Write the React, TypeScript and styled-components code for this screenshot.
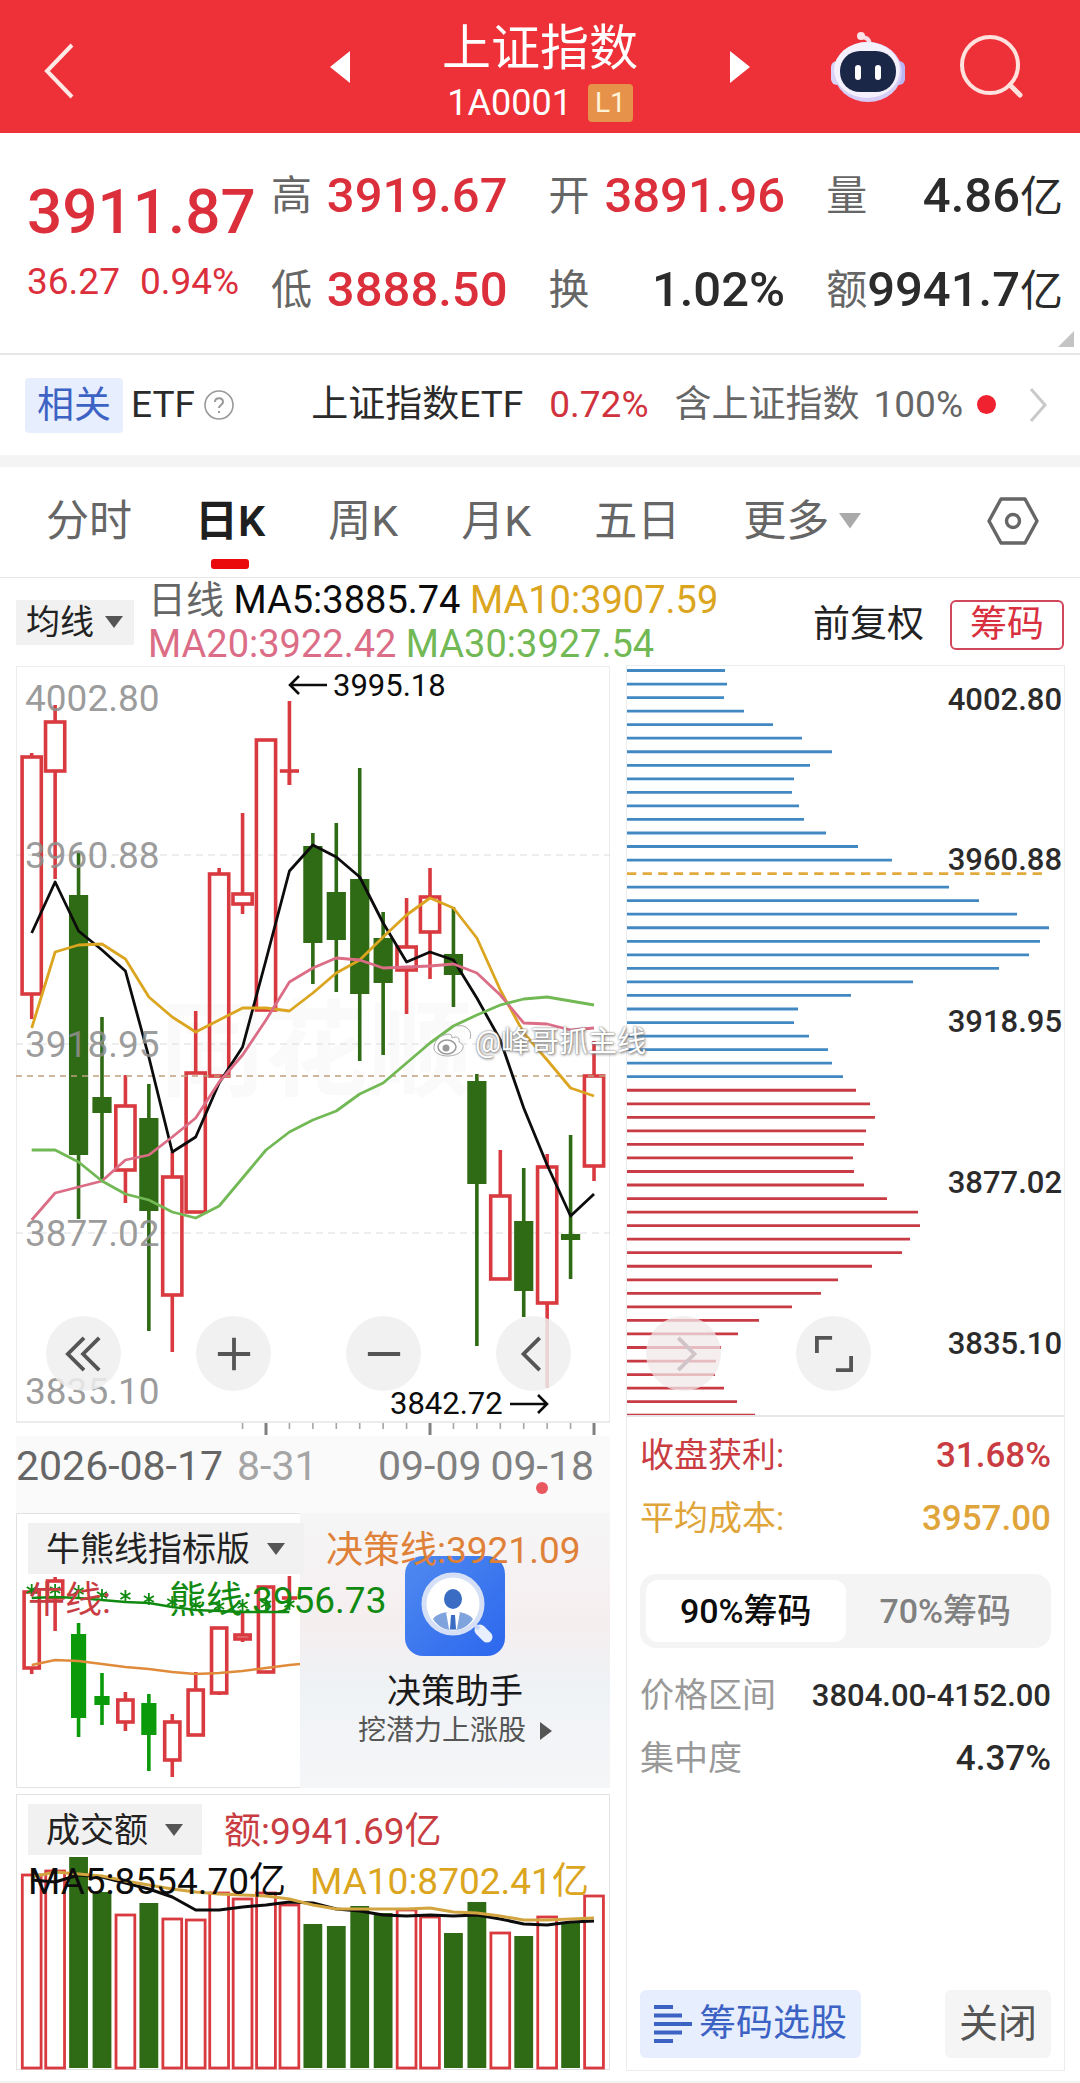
import { useState } from "react";
import styled, { createGlobalStyle } from "styled-components";

type Candle = {
  up: boolean;
  high: number;
  top: number;
  bottom: number;
  low: number;
};

const RED = "#d93a40";
const GREEN = "#2f6a14";
const YELLOW = "#dba520";
const PINK = "#dc6d86";
const LIME = "#72b955";

const STEP = 23.43;
const cx = (i: number) => 31.7 + STEP * i;

const toCandles = (rows: number[][]): Candle[] =>
  rows.map(([up, high, top, bottom, low]) => ({
    up: up === 1,
    high,
    top,
    bottom,
    low,
  }));

const toPoints = (values: number[]) =>
  values.map((y, i) => `${cx(i)},${y}`).join(" ");

const dayCandles = toCandles([
  [1, 753, 757, 994, 1019],
  [1, 705, 722, 771, 879],
  [0, 853, 895, 1155, 1219],
  [0, 1017, 1097, 1113, 1180],
  [1, 1075, 1106, 1170, 1203],
  [0, 1084, 1118, 1211, 1331],
  [1, 1152, 1177, 1295, 1352],
  [1, 1011, 1073, 1212, 1212],
  [1, 868, 874, 1076, 1076],
  [1, 813, 894, 904, 914],
  [1, 740, 740, 1010, 1010],
  [1, 701, 771, 771, 785],
  [0, 833, 846, 943, 984],
  [0, 823, 892, 940, 992],
  [0, 768, 879, 994, 1061],
  [0, 912, 938, 983, 1055],
  [1, 898, 947, 970, 1014],
  [1, 868, 897, 932, 979],
  [0, 907, 954, 975, 1007],
  [0, 1074, 1081, 1184, 1346],
  [1, 1150, 1196, 1279, 1279],
  [0, 1168, 1221, 1291, 1317],
  [1, 1154, 1167, 1303, 1388],
  [0, 1135, 1234, 1240, 1279],
  [1, 1041, 1076, 1166, 1181],
]);

const ma5 = [
  933, 882, 931, 950, 971, 1057, 1152, 1137, 1083, 1047, 960, 871, 845, 857,
  877, 923, 962, 952, 960, 998, 1040, 1108, 1165, 1216, 1194,
];
const ma10 = [
  1028, 952, 945, 944, 959, 997, 1017, 1032, 1020, 1008, 1008, 1011, 993, 973,
  960, 937, 915, 898, 908, 938, 990, 1033, 1060, 1088, 1096,
];
const ma20 = [
  1220, 1193, 1187, 1181, 1160, 1155, 1137, 1118, 1082, 1055, 1020, 982, 968,
  958, 960, 968, 967, 966, 964, 973, 995, 1023, 1024, 1030, 1028,
];
const ma30 = [
  1150, 1150, 1162, 1181, 1194, 1200, 1212, 1218, 1206, 1178, 1150, 1132, 1120,
  1111, 1094, 1083, 1063, 1043, 1026, 1015, 1005, 999, 997, 1001, 1005,
];

const bullCandles = toCandles([
  [1, 1592, 1592, 1668, 1674],
  [1, 1577, 1581, 1598, 1631],
  [0, 1623, 1634, 1718, 1737],
  [0, 1673, 1696, 1705, 1725],
  [1, 1692, 1700, 1722, 1731],
  [0, 1694, 1703, 1735, 1771],
  [1, 1714, 1722, 1760, 1777],
  [1, 1672, 1690, 1735, 1735],
  [1, 1627, 1628, 1693, 1695],
  [1, 1612, 1635, 1639, 1642],
  [1, 1587, 1587, 1672, 1672],
  [1, 1576, 1598, 1598, 1602],
]);
const bearLine = [
  1598, 1597, 1598, 1600, 1602, 1603, 1607, 1610, 1611, 1612, 1612, 1612,
];
const starLine = [
  1590, 1590, 1591, 1595, 1596, 1599, 1602, 1605, 1606, 1605, 1604, 1604,
];
const decisionLine = [
  1665, 1660, 1661, 1664, 1667, 1669, 1672, 1674, 1673, 1671, 1668, 1665,
];

const volumes = [
  [1, 1875],
  [1, 1871],
  [0, 1857],
  [0, 1892],
  [1, 1915],
  [0, 1903],
  [1, 1919],
  [1, 1920],
  [1, 1893],
  [1, 1899],
  [1, 1893],
  [1, 1905],
  [0, 1924],
  [0, 1926],
  [0, 1906],
  [0, 1913],
  [1, 1910],
  [1, 1917],
  [0, 1933],
  [0, 1902],
  [1, 1933],
  [0, 1936],
  [1, 1917],
  [0, 1922],
  [1, 1896],
];
const volMa5 = [
  1880, 1882, 1875, 1877, 1883, 1889, 1897, 1910, 1910, 1907, 1905, 1902, 1903,
  1909, 1911, 1915, 1916, 1915, 1916, 1915, 1919, 1924, 1925, 1922, 1921,
];
const volMa10 = [
  1877, 1872, 1874, 1876, 1881, 1885, 1889, 1892, 1894, 1895, 1896, 1899, 1905,
  1909, 1909, 1909, 1909, 1908, 1912, 1913, 1916, 1920, 1920, 1919, 1918,
];

// chip amount per price level, top to bottom; 0 is the average cost level
const chips = [
  98, 100, 97, 117, 146, 175, 205, 183, 167, 165, 172, 177, 199, 231, 265, 0,
  322, 352, 390, 422, 413, 402, 372, 286, 224, 171, 167, 182, 201, 205, 216,
  229, 243, 248, 239, 237, 226, 227, 237, 260, 291, 293, 283, 275, 245, 211,
  194, 165, 132, 111, 94, 89, 88, 97, 110, 128,
];
const FIRST_PROFIT = 31;

const periods = ["分时", "日K", "周K", "月K", "五日"];

const Candles = ({
  data,
  half,
  down,
}: {
  data: Candle[];
  half: number;
  down: string;
}) => (
  <>
    {data.map((c, i) => {
      const x = cx(i);
      const color = c.up ? RED : down;
      const flat = c.top === c.bottom;
      return (
        <g key={i} stroke={color} strokeWidth={3.6}>
          <line x1={x} x2={x} y1={c.high} y2={flat ? c.low : c.top} />
          <line x1={x} x2={x} y1={c.bottom} y2={c.low} />
          {flat && <line x1={x - half} x2={x + half} y1={c.top} y2={c.top} />}
          {!flat && (
            <rect
              x={x - half}
              y={c.top}
              width={half * 2}
              height={c.bottom - c.top}
              fill={c.up ? "none" : down}
              stroke={c.up ? color : "none"}
            />
          )}
        </g>
      );
    })}
  </>
);

const DayChart = () => (
  <Chart viewBox="16 666 594 770" role="img" aria-label="日K">
    <text x={160} y={1088} fontSize={104} fontWeight={700} fill="#fafafb">
      同花顺
    </text>
    <path d="M16.5 1422V666.5H609.5V1422" fill="none" stroke="#ececec" />
    <line x1={16} x2={610} y1={1422} y2={1422} stroke="#d8d8d8" />
    {[855, 1044, 1233].map((y) => (
      <line
        key={y}
        x1={16}
        x2={610}
        y1={y}
        y2={y}
        stroke="#dcdcdc"
        strokeDasharray="7 5"
      />
    ))}
    <Candles data={dayCandles} half={9.6} down={GREEN} />
    <line
      x1={16}
      x2={610}
      y1={1076}
      y2={1076}
      stroke="#bfa07c"
      strokeWidth={1.6}
      strokeDasharray="6 5"
    />
    <g fill="none" strokeWidth={2.8} strokeLinejoin="round">
      <polyline points={toPoints(ma5)} stroke="#0c0c0c" />
      <polyline points={toPoints(ma10)} stroke={YELLOW} />
      <polyline points={toPoints(ma20)} stroke={PINK} />
      <polyline points={toPoints(ma30)} stroke={LIME} />
    </g>
    <g fontSize={37} fill="#8e8e8e" fillOpacity={0.88}>
      <text x={25} y={711}>4002.80</text>
      <text x={25} y={868}>3960.88</text>
      <text x={25} y={1057}>3918.95</text>
      <text x={25} y={1246}>3877.02</text>
      <text x={25} y={1404}>3835.10</text>
    </g>
    <g fontSize={31} fill="#0c0c0c">
      <text x={333} y={696}>3995.18</text>
      <text x={390} y={1414}>3842.72</text>
    </g>
    <g fill="none" stroke="#0c0c0c" strokeWidth={2.6}>
      <path d="M327 685H290M299 676L290 685L299 694" />
      <path d="M510 1404H547M538 1395L547 1404L538 1413" />
    </g>
    {Array.from({ length: 16 }, (_, k) => k + 9).map((i) => {
      const major = (i - 10) % 7 === 0;
      return (
        <line
          key={i}
          x1={cx(i)}
          x2={cx(i)}
          y1={1423}
          y2={major ? 1435 : 1429}
          stroke={major ? "#808080" : "#a5a5a5"}
          strokeWidth={major ? 3 : 1.6}
        />
      );
    })}
  </Chart>
);

const ChipChart = () => (
  <Chart viewBox="627 666 437 749" role="img" aria-label="筹码分布">
    {chips.map((length, i) => {
      const y = 670.5 + i * 13.54;
      return length === 0 ? (
        <line
          key={i}
          x1={627}
          x2={1043}
          y1={y}
          y2={y}
          stroke="#e2a93c"
          strokeWidth={2.6}
          strokeDasharray="9.3 6.3"
        />
      ) : (
        <line
          key={i}
          x1={627}
          x2={627 + length}
          y1={y}
          y2={y}
          stroke={i < FIRST_PROFIT ? "#4289c4" : "#c93b44"}
          strokeWidth={2.8}
        />
      );
    })}
    <g fontSize={31} fontWeight={500} fill="#2b2b2b" textAnchor="end">
      <text x={1062} y={710}>4002.80</text>
      <text x={1062} y={870}>3960.88</text>
      <text x={1062} y={1032}>3918.95</text>
      <text x={1062} y={1193}>3877.02</text>
      <text x={1062} y={1354}>3835.10</text>
    </g>
  </Chart>
);

const BullBearChart = () => (
  <Chart viewBox="16 1513 284 275" role="img" aria-label="牛熊线">
    <path d="M300 1513.5H16.5V1787.5H300" fill="none" stroke="#e2e2e2" />
    <Candles data={bullCandles} half={7.6} down="#0a9a0a" />
    <g fill="none" strokeWidth={2.4}>
      <polyline points={toPoints(bearLine)} stroke="#118a11" />
      <polyline
        points={`${toPoints(decisionLine)} 300,1664`}
        stroke="#e08a3c"
      />
    </g>
    <g stroke="#118a11" strokeWidth={1.8}>
      {starLine.map((y, i) => (
        <path
          key={i}
          d={`M${cx(i)} ${y - 6}V${y + 6}M${cx(i) - 5} ${y - 3}L${cx(i) + 5} ${
            y + 3
          }M${cx(i) - 5} ${y + 3}L${cx(i) + 5} ${y - 3}`}
        />
      ))}
    </g>
  </Chart>
);

const VolumeChart = () => (
  <Chart viewBox="16 1794 594 276" role="img" aria-label="成交额">
    <rect
      x={16.5}
      y={1794.5}
      width={593}
      height={275}
      fill="none"
      stroke="#e2e2e2"
    />
    {volumes.map(([up, top], i) => (
      <rect
        key={i}
        x={cx(i) - 9.4}
        y={top}
        width={18.8}
        height={2068 - top}
        fill={up ? "none" : GREEN}
        stroke={up ? RED : "none"}
        strokeWidth={2.8}
      />
    ))}
    <g fill="none" strokeWidth={3} strokeLinejoin="round">
      <polyline points={toPoints(volMa5)} stroke="#0c0c0c" />
      <polyline points={toPoints(volMa10)} stroke="#d3a540" />
    </g>
  </Chart>
);

const RobotIcon = () => (
  <svg width="76" height="72" viewBox="0 0 76 72" fill="none">
    <path
      d="M40 15C40 9 37 6 31 6"
      stroke="#f5dbe6"
      strokeWidth="4"
      strokeLinecap="round"
    />
    <circle cx="31" cy="5" r="4" fill="#fbe3ea" />
    <rect x="1" y="30" width="12" height="24" rx="6" fill="#d9d3f6" />
    <rect x="63" y="30" width="12" height="24" rx="6" fill="#b9b4f4" />
    <ellipse cx="38" cy="41" rx="34" ry="30" fill="#d5cdf6" />
    <ellipse cx="37" cy="39" rx="33" ry="28" fill="#f4f0fc" />
    <rect x="10" y="20" width="56" height="41" rx="20" fill="#1b2747" />
    <rect x="25" y="34" width="6" height="15" rx="3" fill="#fff" />
    <rect x="45" y="34" width="6" height="15" rx="3" fill="#fff" />
  </svg>
);

const AssistantIcon = () => (
  <svg width="100" height="100" viewBox="0 0 100 100">
    <defs>
      <linearGradient id="assistant" x1="0" y1="0" x2="1" y2="1">
        <stop offset="0" stopColor="#4f8af0" />
        <stop offset="1" stopColor="#2c67ee" />
      </linearGradient>
    </defs>
    <rect width="100" height="100" rx="18" fill="url(#assistant)" />
    <path
      d="M75 74L82 81"
      stroke="#e8f0ff"
      strokeWidth="11"
      strokeLinecap="round"
    />
    <path d="M67 66L74 73" stroke="#c5d6fa" strokeWidth="4" />
    <circle cx="48" cy="48" r="29" fill="#fff" stroke="#d5dff5" strokeWidth="5" />
    <ellipse cx="48" cy="43" rx="9" ry="10" fill="#3a6cc4" />
    <path
      d="M28 63C31 59 36 57 42 56L48 70L54 56C60 57 65 59 68 63C63 71 56 74 48 74C40 74 33 71 28 63Z"
      fill="#7fa3dc"
    />
    <path d="M41 56L44 73H52L55 56L48 60Z" fill="#fff" />
    <path d="M46 59H50L51 73H45Z" fill="#3a6cc4" />
  </svg>
);

const WeiboIcon = () => (
  <svg width="40" height="34" viewBox="0 0 40 34" fill="none">
    <path
      d="M16 9C8 10 1 17 2 24C4 33 27 34 31 23C32 19 28 18 27 17C28 12 24 11 20 13C20 10 19 9 16 9Z"
      fill="#fff"
      stroke="#aaa"
      strokeWidth="1"
    />
    <ellipse cx="15" cy="22" rx="9" ry="7" stroke="#999" strokeWidth="1.5" />
    <circle cx="14" cy="23" r="3.5" fill="#999" />
    <path
      d="M26 3C33 1 39 7 36 14M27 9C30 8 32 10 31 13"
      stroke="#fff"
      strokeWidth="3"
      strokeLinecap="round"
    />
    <path d="M25 1C34 -1 41 6 38 14" stroke="#aaa" strokeWidth="1" />
  </svg>
);

const Picker = ({ label, wide }: { label: string; wide?: boolean }) => (
  <PickerBox $wide={wide}>
    <select aria-label={label} defaultValue={label}>
      <option>{label}</option>
    </select>
    <Triangle viewBox="0 0 20 14" $size={20}>
      <path d="M1 1H19L10 13Z" fill="#555" />
    </Triangle>
  </PickerBox>
);

const App = () => {
  const [period, setPeriod] = useState("日K");
  const [share, setShare] = useState("90%筹码");

  return (
    <>
      <GlobalStyle />
      <Header>
        <IconButton aria-label="返回" className="back">
          <svg width="32" height="58" viewBox="0 0 32 58" fill="none">
            <path d="M29 3L4 29L29 55" stroke="#ffe9e6" strokeWidth="4" />
          </svg>
        </IconButton>
        <div className="stock">
          <IconButton aria-label="上一个">
            <svg width="20" height="32" viewBox="0 0 20 32">
              <path d="M20 0V32L0 16Z" fill="#fff" />
            </svg>
          </IconButton>
          <div className="name">
            <h1>上证指数</h1>
            <p>
              1A0001 <span>L1</span>
            </p>
          </div>
          <IconButton aria-label="下一个">
            <svg width="20" height="32" viewBox="0 0 20 32">
              <path d="M0 0V32L20 16Z" fill="#fff" />
            </svg>
          </IconButton>
        </div>
        <div className="tools">
          <IconButton aria-label="智能助手">
            <RobotIcon />
          </IconButton>
          <IconButton aria-label="搜索">
            <svg width="66" height="66" viewBox="0 0 66 66" fill="none">
              <circle cx="32" cy="31" r="28" stroke="#ffe1de" strokeWidth="4" />
              <path
                d="M52 51L62 61"
                stroke="#ffe1de"
                strokeWidth="5"
                strokeLinecap="round"
              />
            </svg>
          </IconButton>
        </div>
      </Header>

      <Quote>
        <div className="price">
          <strong>3911.87</strong>
          <p>
            <span>36.27</span>
            <span>0.94%</span>
          </p>
        </div>
        <Stats $red>
          <dt>高</dt>
          <dd>3919.67</dd>
          <dt>低</dt>
          <dd>3888.50</dd>
        </Stats>
        <Stats>
          <dt>开</dt>
          <dd className="up">3891.96</dd>
          <dt>换</dt>
          <dd>1.02%</dd>
        </Stats>
        <Stats>
          <dt>量</dt>
          <dd>
            4.86<small>亿</small>
          </dd>
          <dt>额</dt>
          <dd>
            9941.7<small>亿</small>
          </dd>
        </Stats>
        <svg className="corner" width="16" height="16" viewBox="0 0 16 16">
          <path d="M16 0V16H0Z" fill="#c4c4c4" />
        </svg>
      </Quote>

      <EtfBar>
        <span className="tag">相关</span>
        <span>ETF</span>
        <svg width="32" height="32" viewBox="0 0 32 32" fill="none">
          <circle cx="16" cy="16" r="14" stroke="#999" strokeWidth="1.6" />
          <path
            d="M12 13C12 8 20 8 20 13C20 16 16 16 16 19M16 22V24"
            stroke="#999"
            strokeWidth="2"
          />
        </svg>
        <a href="#etf">
          <span>上证指数ETF</span>
          <span className="rate">0.72%</span>
          <span className="muted">
            <span>含上证指数</span>
            <span>100%</span>
            <i />
          </span>
        </a>
        <svg width="20" height="36" viewBox="0 0 20 36" fill="none">
          <path d="M3 2L17 18L3 34" stroke="#c9c9c9" strokeWidth="3" />
        </svg>
      </EtfBar>

      <Tabs>
        {periods.map((name) => (
          <Tab
            key={name}
            $active={name === period}
            onClick={() => setPeriod(name)}
          >
            {name}
          </Tab>
        ))}
        <Tab>
          更多
          <Triangle viewBox="0 0 20 14" $size={22}>
            <path d="M0 0H20L10 14Z" fill="#aaa" />
          </Triangle>
        </Tab>
        <IconButton aria-label="设置" className="settings">
          <svg width="54" height="50" viewBox="0 0 54 50" fill="none">
            <path
              d="M15 3H39L51 25L39 47H15L3 25Z"
              stroke="#666"
              strokeWidth="3.4"
              strokeLinejoin="round"
            />
            <circle cx="27" cy="25" r="6.5" stroke="#666" strokeWidth="3.4" />
          </svg>
        </IconButton>
      </Tabs>

      <Averages>
        <Picker label="均线" />
        <p className="legend">
          <Tint $color="#666">日线</Tint> <Tint $color="#0c0c0c">MA5:3885.74</Tint>{" "}
          <Tint $color={YELLOW}>MA10:3907.59</Tint>
          <br />
          <Tint $color={PINK}>MA20:3922.42</Tint>{" "}
          <Tint $color={LIME}>MA30:3927.54</Tint>
        </p>
        <div className="modes">
          <button>前复权</button>
          <button className="chips">筹码</button>
        </div>
      </Averages>

      <Board>
        <div>
          <DayChart />
          <Dates>
            <span className="first">2026-08-17</span>
            <span className="faded">8-31</span>
            <span className="later">09-09</span>
            <span className="last">09-18</span>
          </Dates>
          <Indicator>
            <BullBearChart />
            <Promo href="#assistant">
              <AssistantIcon />
              <strong>决策助手</strong>
              <span>
                挖潜力上涨股
                <svg width="12" height="18" viewBox="0 0 12 18">
                  <path d="M0 0L12 9L0 18Z" fill="#555" />
                </svg>
              </span>
            </Promo>
            <Overlay>
              <div>
                <Picker label="牛熊线指标版" wide />
                <Tint $color="#df8138">决策线:3921.09</Tint>
              </div>
              <p className="bull">
                <Tint $color="#c83c42">牛线:</Tint>
                <Tint $color="#118a11">熊线:3956.73</Tint>
              </p>
            </Overlay>
          </Indicator>
          <Volume>
            <VolumeChart />
            <Overlay>
              <div>
                <Picker label="成交额" wide />
                <Tint $color="#c83c42">额:9941.69亿</Tint>
              </div>
              <p>
                <Tint $color="#0c0c0c">MA5:8554.70亿</Tint>
                <Tint $color={YELLOW}>MA10:8702.41亿</Tint>
              </p>
            </Overlay>
          </Volume>
        </div>

        <ChipPanel>
          <ChipChart />
          <ChipInfo>
            <InfoRow $color="#c83c42">
              <span>收盘获利:</span>
              <b>31.68%</b>
            </InfoRow>
            <InfoRow $color="#e0a53a">
              <span>平均成本:</span>
              <b>3957.00</b>
            </InfoRow>
            <Segment>
              {["90%筹码", "70%筹码"].map((name) => (
                <SegmentButton
                  key={name}
                  $active={name === share}
                  onClick={() => setShare(name)}
                >
                  {name}
                </SegmentButton>
              ))}
            </Segment>
            <InfoRow>
              <span>价格区间</span>
              <b className="range">3804.00-4152.00</b>
            </InfoRow>
            <InfoRow>
              <span>集中度</span>
              <b>4.37%</b>
            </InfoRow>
            <footer>
              <button className="pick">
                <svg width="38" height="38" viewBox="0 0 38 38">
                  <path
                    d="M0 2H19M0 10.5H28M0 19H38M0 27.5H28M0 36H19"
                    stroke="#3c62c4"
                    strokeWidth="4"
                  />
                </svg>
                筹码选股
              </button>
              <button className="close">关闭</button>
            </footer>
          </ChipInfo>
        </ChipPanel>

        <Watermark>
          <WeiboIcon />
          @峰哥抓主线
        </Watermark>

        <ZoomBar>
          <button aria-label="最早">
            <svg viewBox="0 0 40 40">
              <path d="M20 3L3 20L20 37M36 3L19 20L36 37" />
            </svg>
          </button>
          <button aria-label="放大">
            <svg viewBox="0 0 40 40">
              <path d="M20 3V37M3 20H37" />
            </svg>
          </button>
          <button aria-label="缩小">
            <svg viewBox="0 0 40 40">
              <path d="M3 20H37" />
            </svg>
          </button>
          <button aria-label="向左">
            <svg viewBox="0 0 40 40">
              <path d="M26 3L9 20L26 37" />
            </svg>
          </button>
          <button aria-label="向右" disabled>
            <svg viewBox="0 0 40 40">
              <path d="M14 3L31 20L14 37" />
            </svg>
          </button>
          <button aria-label="全屏">
            <svg viewBox="0 0 40 40">
              <path d="M2 19V3H18M38 22V37H22" />
            </svg>
          </button>
        </ZoomBar>
      </Board>
      <BottomLine />
    </>
  );
};

export default App;

const GlobalStyle = createGlobalStyle`
  * {
    box-sizing: border-box;
    margin: 0;
    padding: 0;
  }
  body {
    background: #fff;
    color: #2b2b2b;
    font-family: Roboto, "Noto Sans CJK SC", sans-serif;
    font-size: 37px;
    line-height: 1.2;
  }
  button,
  select {
    border: none;
    background: none;
    color: inherit;
    font: inherit;
    cursor: pointer;
  }
  a {
    color: inherit;
    text-decoration: none;
  }
  svg {
    display: block;
    flex-shrink: 0;
  }
`;

const Chart = styled.svg`
  width: 100%;
  height: auto;
`;

const Triangle = styled.svg<{ $size: number }>`
  width: ${({ $size }) => $size}px;
`;

const Tint = styled.span<{ $color: string }>`
  color: ${({ $color }) => $color};
`;

const IconButton = styled.button`
  display: grid;
  place-items: center;
`;

const Header = styled.header`
  display: grid;
  grid-template-columns: 1fr auto 1fr;
  align-items: center;
  height: 133px;
  padding: 0 43px;
  background: #ee3138;
  color: #fff;
  .back {
    justify-self: start;
    margin-top: 8px;
  }
  .stock {
    display: flex;
    align-items: center;
    gap: 92px;
  }
  .name {
    padding-top: 8px;
    text-align: center;
  }
  h1 {
    font-size: 49px;
    font-weight: 400;
    line-height: 64px;
  }
  p {
    display: flex;
    align-items: center;
    justify-content: center;
    gap: 16px;
    font-size: 36px;
    line-height: 44px;
    white-space: nowrap;
  }
  p span {
    padding: 0 7px;
    border-radius: 4px;
    background: #e7924a;
    color: #fff3d8;
    font-size: 28px;
    line-height: 38px;
  }
  .tools {
    display: flex;
    align-items: center;
    justify-content: flex-end;
    gap: 52px;
    padding-right: 13px;
  }
`;

const Quote = styled.section`
  position: relative;
  display: grid;
  grid-template-columns: 203px 1fr 1fr 1fr;
  gap: 41px;
  padding: 28px 17px 28px 27px;
  border-bottom: 2px solid #e6e6e6;
  .price {
    color: #dc2f3c;
    white-space: nowrap;
  }
  strong {
    display: block;
    font-size: 62px;
    font-weight: 500;
    line-height: 102px;
  }
  .price p {
    display: flex;
    gap: 20px;
    font-size: 37px;
    line-height: 38px;
  }
  .corner {
    position: absolute;
    right: 6px;
    bottom: 6px;
  }
`;

const Stats = styled.dl<{ $red?: boolean }>`
  display: grid;
  grid-template-columns: auto 1fr;
  grid-auto-rows: 70px;
  row-gap: 24px;
  line-height: 70px;
  white-space: nowrap;
  dt {
    color: #666;
    font-size: 41px;
  }
  dd {
    color: ${({ $red }) => ($red ? "#dc2f3c" : "#2b2b2b")};
    font-size: 49px;
    font-weight: 500;
    text-align: right;
  }
  .up {
    color: #dc2f3c;
  }
  small {
    font-size: 43px;
    font-weight: 400;
  }
`;

const EtfBar = styled.section`
  display: flex;
  align-items: center;
  gap: 8px;
  height: 112px;
  padding: 0 32px 0 25px;
  border-bottom: 12px solid #f4f4f4;
  white-space: nowrap;
  .tag {
    padding: 0 12px;
    border-radius: 4px;
    background: #e7eefd;
    color: #3c62c4;
    line-height: 55px;
  }
  a {
    display: flex;
    align-items: center;
    flex: 1;
    justify-content: flex-end;
    gap: 26px;
  }
  .rate {
    color: #d0323e;
  }
  .muted {
    display: flex;
    align-items: center;
    gap: 14px;
    color: #666;
  }
  i {
    width: 19px;
    height: 19px;
    margin-right: 24px;
    border-radius: 50%;
    background: #f0222f;
  }
`;

const Tabs = styled.nav`
  display: flex;
  align-items: center;
  gap: 63px;
  height: 111px;
  padding: 0 40px 2px 46px;
  border-bottom: 1px solid #e6e6e6;
  .settings {
    margin-left: auto;
  }
`;

const Tab = styled.button<{ $active?: boolean }>`
  position: relative;
  display: flex;
  align-items: center;
  gap: 10px;
  color: ${({ $active }) => ($active ? "#1f1f1f" : "#666")};
  font-size: 43px;
  font-weight: ${({ $active }) => ($active ? 600 : 400)};
  line-height: 100px;
  white-space: nowrap;
  &::after {
    content: "";
    display: ${({ $active }) => ($active ? "block" : "none")};
    position: absolute;
    bottom: 2px;
    left: calc(50% - 19px);
    width: 38px;
    height: 10px;
    border-radius: 3px;
    background: #ea0c0c;
  }
`;

const PickerBox = styled.label<{ $wide?: boolean }>`
  display: flex;
  align-items: center;
  gap: ${({ $wide }) => ($wide ? 16 : 10)}px;
  height: ${({ $wide }) => ($wide ? 51 : 45)}px;
  padding: 0 ${({ $wide }) => ($wide ? 18 : 10)}px;
  background: #f1f1f1;
  color: #222;
  select {
    appearance: none;
    font-size: 34px;
    line-height: 44px;
  }
`;

const Averages = styled.section`
  display: flex;
  align-items: center;
  height: 88px;
  padding: 0 16px;
  .legend {
    flex: 1;
    margin-left: 14px;
    font-size: 38px;
    line-height: 44px;
    white-space: nowrap;
  }
  .modes {
    display: flex;
    align-items: center;
    gap: 26px;
    padding-top: 6px;
    color: #222;
  }
  .chips {
    height: 50px;
    padding: 0 18px;
    border: 2px solid #d0465a;
    border-radius: 6px;
    color: #d93040;
    line-height: 46px;
  }
`;

const Board = styled.main`
  position: relative;
  display: grid;
  grid-template-columns: 594fr 437fr;
  gap: 17px;
  padding: 0 16px;
`;

const Dates = styled.div`
  position: relative;
  display: flex;
  height: 77px;
  background: #fafafa;
  color: #808080;
  font-size: 41px;
  line-height: 60px;
  white-space: nowrap;
  .first {
    color: #666;
  }
  .faded {
    margin-left: 14px;
    color: #a5a5a5;
  }
  .later {
    margin-left: auto;
  }
  .last {
    margin: 0 16px 0 9px;
  }
  &::after {
    content: "";
    position: absolute;
    right: 62px;
    bottom: 19px;
    width: 12px;
    height: 12px;
    border-radius: 50%;
    background: #e8585e;
  }
`;

const Indicator = styled.section`
  position: relative;
  display: grid;
  grid-template-columns: 284fr 310fr;
`;

const Volume = styled.section`
  position: relative;
  margin-top: 6px;
`;

const Overlay = styled.div`
  position: absolute;
  top: 10px;
  left: 12px;
  line-height: 50px;
  white-space: nowrap;
  div {
    display: flex;
    align-items: flex-start;
    gap: 22px;
  }
  div > span {
    padding-top: 3px;
  }
  p {
    display: flex;
    gap: 24px;
  }
  .bull {
    gap: 58px;
  }
`;

const Promo = styled.a`
  display: flex;
  flex-direction: column;
  align-items: center;
  padding: 43px 0 0;
  background: linear-gradient(#f6f6f7, #f5eeef 40%, #eff2f5 62%, #f5f6f8);
  strong {
    margin-top: 13px;
    color: #1a1a1a;
    font-size: 34px;
    font-weight: 400;
    line-height: 44px;
  }
  span {
    display: flex;
    align-items: center;
    gap: 14px;
    color: #555;
    font-size: 28px;
    line-height: 36px;
  }
`;

const ChipPanel = styled.aside`
  display: flex;
  flex-direction: column;
  box-shadow: 0 0 0 1px #ececec;
`;

const ChipInfo = styled.section`
  display: flex;
  flex: 1;
  flex-direction: column;
  padding: 7px 13px 12px;
  border-top: 2px solid #e6e6e6;
  footer {
    display: flex;
    justify-content: space-between;
    margin-top: auto;
  }
  footer button {
    display: flex;
    align-items: center;
    gap: 7px;
    height: 68px;
    padding: 0 14px;
    border-radius: 6px;
    white-space: nowrap;
  }
  .pick {
    background: #e7eefd;
    color: #3c62c4;
  }
  .close {
    background: #f5f5f5;
    color: #555;
    font-size: 39px;
  }
`;

const InfoRow = styled.div<{ $color?: string }>`
  display: flex;
  align-items: center;
  justify-content: space-between;
  height: 63px;
  color: ${({ $color }) => $color || "#999"};
  font-size: 34px;
  white-space: nowrap;
  b {
    color: ${({ $color }) => $color || "#2b2b2b"};
    font-size: 35px;
    font-weight: 500;
  }
  .range {
    font-size: 31px;
  }
`;

const Segment = styled.div`
  display: grid;
  grid-template-columns: 1fr 1fr;
  margin: 24px 0 16px;
  padding: 6px;
  border-radius: 16px;
  background: #f4f4f4;
`;

const SegmentButton = styled.button<{ $active: boolean }>`
  border-radius: 12px;
  background: ${({ $active }) => ($active ? "#fff" : "none")};
  color: ${({ $active }) => ($active ? "#0c0c0c" : "#808080")};
  font-size: 34px;
  font-weight: 500;
  line-height: 62px;
`;

const Watermark = styled.div`
  position: absolute;
  top: 358px;
  left: 40%;
  display: flex;
  align-items: center;
  gap: 3px;
  color: #fff;
  font-size: 29px;
  line-height: 36px;
  text-shadow: 0 0 2px #777, 1px 1px 3px #777;
  white-space: nowrap;
`;

const ZoomBar = styled.div`
  position: absolute;
  top: 650px;
  left: 46px;
  display: flex;
  gap: 75px;
  button {
    display: grid;
    place-items: center;
    width: 75px;
    height: 75px;
    border-radius: 50%;
    background: rgba(238, 238, 238, 0.85);
  }
  svg {
    width: 38px;
    fill: none;
    stroke: #555;
    stroke-width: 4;
  }
  button:disabled {
    background: rgba(240, 232, 234, 0.75);
  }
  button:disabled svg {
    stroke: #d0c4c8;
  }
`;

const BottomLine = styled.hr`
  height: 3px;
  margin-top: 11px;
  border: none;
  background: #f3f3f3;
`;
